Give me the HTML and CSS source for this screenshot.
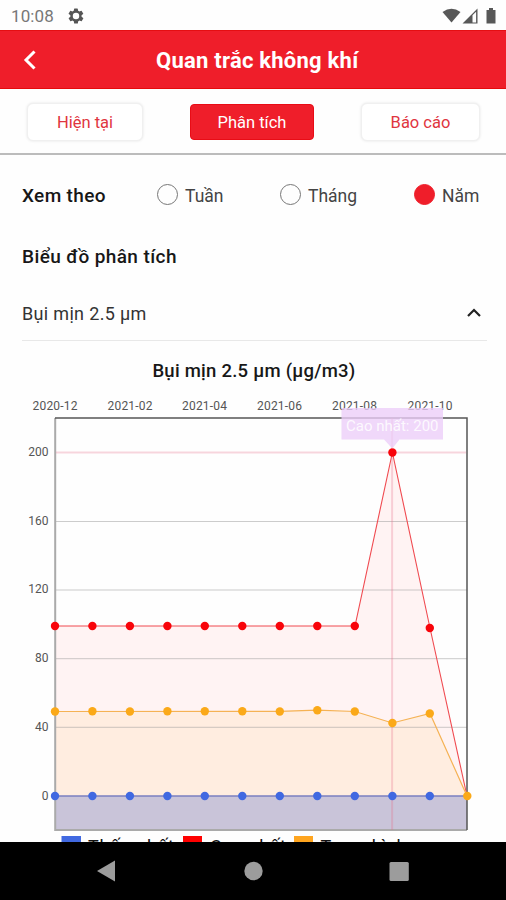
FILE: index.html
```
<!DOCTYPE html>
<html lang="vi">
<head>
<meta charset="utf-8">
<title>Quan trắc không khí</title>
<link rel="stylesheet" href="styles.css">
</head>
<body>
<div class="screen">
  <div class="status">
    <span class="clock">10:08</span>
    <svg class="gear" width="18" height="18" viewBox="0 0 24 24"><path fill-rule="evenodd" d="M19.4 13a7.500 7.500 0 0 0 0-2l2.100-1.600a.5.5 0 0 0 .1-.7l-2-3.400a.5.5 0 0 0-.6-.2l-2.500 1a7.500 7.500 0 0 0-1.700-1l-.4-2.600a.5.5 0 0 0-.5-.5h-4a.5.5 0 0 0-.5.500l-.4 2.600a7.500 7.500 0 0 0-1.700 1l-2.500-1a.5.5 0 0 0-.6.200l-2 3.400a.5.5 0 0 0 .1.700L4.500 11a7.500 7.500 0 0 0 0 2l-2.100 1.600a.5.5 0 0 0-.1.700l2 3.400c.1.200.4.300.6.200l2.500-1c.5.400 1.100.8 1.700 1l.4 2.600c0 .3.200.5.500.5h4c.3 0 .5-.2.500-.5l.4-2.600c.6-.2 1.200-.6 1.700-1l2.500 1c.2.100.5 0 .6-.2l2-3.400a.5.5 0 0 0-.1-.7zM12 16.300a4.300 4.300 0 1 1 0-8.600 4.300 4.300 0 0 1 0 8.600z"/></svg>
    <svg class="signals" width="56" height="18" viewBox="0 0 56 18"><path d="M.500 5Q9.500-1.500 18.500 5L9.500 15.500z"/><path d="M20.500 16.500 35.500 1.500v15zM30.500 8.300v7.200h3.600V4.700z" fill-rule="evenodd"/><path d="M44.500 3h2.500V1h4v2h2.500v13.500h-9z"/></svg>
  </div>
  <header class="header">
    <svg class="back" width="16" height="22" viewBox="0 0 16 22"><path d="M12.500 2.500 4 11l8.500 8.500"/></svg>
    <h1>Quan trắc không khí</h1>
  </header>
  <nav class="tabs">
    <button class="tab tab-now">Hiện tại</button>
    <button class="tab tab-active">Phân tích</button>
    <button class="tab tab-report">Báo cáo</button>
  </nav>
  <main>
    <div class="period">
      <strong>Xem theo</strong>
      <label class="option week"><i class="radio"></i>Tuần</label>
      <label class="option month"><i class="radio"></i>Tháng</label>
      <label class="option year"><i class="radio checked"></i>Năm</label>
    </div>
    <h2>Biểu đồ phân tích</h2>
    <div class="accordion"><span>Bụi mịn 2.5 µm</span><svg width="16" height="12" viewBox="0 0 16 12"><path d="m2 9 6-6 6 6"/></svg></div>
    <h3>Bụi mịn 2.5 µm (µg/m3)</h3>
    <svg class="chart" width="506" height="448" viewBox="0 394 506 448">
      <g class="axis-label" text-anchor="middle">
        <text x="55" y="410" textLength="45">2020-12</text><text x="130" y="410" textLength="45">2021-02</text><text x="204.500" y="410" textLength="45">2021-04</text><text x="279.500" y="410" textLength="45">2021-06</text><text x="354.500" y="410" textLength="45">2021-08</text><text x="430" y="410" textLength="45">2021-10</text>
      </g>
      <g class="axis-label" text-anchor="end">
        <text x="48.500" y="456">200</text><text x="48.500" y="525">160</text><text x="48.500" y="593">120</text><text x="48.500" y="662">80</text><text x="48.500" y="731">40</text><text x="48.500" y="800">0</text>
      </g>
      <path class="area-red" d="M55 626H355L392.400 452.500 430 628 467 796V796H55z"/>
      <path class="area-orange" d="M55 711.500 280 711.300 317 710.200 355 711.500 392.400 723 430 713.500 467 796H55z"/>
      <path class="area-blue" d="M55 796H467V830H55z"/>
      <path class="grid" d="M55 521.500H467M55 590H467M55 658.700H467M55 727.300H467"/>
      <path class="side" d="M55.200 418V830H467"/>
      <path class="frame" d="M55 418H467V830"/>
      <path class="line-red" d="M55 626H355L392.400 452.500 430 628 467 796"/>
      <path class="line-orange" d="M55 711.500 280 711.300 317 710.200 355 711.500 392.400 723 430 713.500 467 796"/>
      <path class="line-blue" d="M55 796H467"/>
      <path class="cross" d="M56 452.500H466M392.100 418V830"/>
      <g class="dot-red"><circle cx="55" cy="626" r="4.200"/><circle cx="92.400" cy="626" r="4.200"/><circle cx="129.900" cy="626" r="4.200"/><circle cx="167.400" cy="626" r="4.200"/><circle cx="204.800" cy="626" r="4.200"/><circle cx="242.300" cy="626" r="4.200"/><circle cx="279.800" cy="626" r="4.200"/><circle cx="317.300" cy="626" r="4.200"/><circle cx="354.800" cy="626" r="4.200"/><circle cx="392.400" cy="452.500" r="4.200"/><circle cx="429.800" cy="628" r="4.200"/></g>
      <g class="dot-blue"><circle cx="55" cy="796" r="4.200"/><circle cx="92.400" cy="796" r="4.200"/><circle cx="129.900" cy="796" r="4.200"/><circle cx="167.400" cy="796" r="4.200"/><circle cx="204.800" cy="796" r="4.200"/><circle cx="242.300" cy="796" r="4.200"/><circle cx="279.800" cy="796" r="4.200"/><circle cx="317.300" cy="796" r="4.200"/><circle cx="354.800" cy="796" r="4.200"/><circle cx="392.400" cy="796" r="4.200"/><circle cx="429.800" cy="796" r="4.200"/></g>
      <g class="dot-orange"><circle cx="55" cy="711.500" r="4.200"/><circle cx="92.400" cy="711.200" r="4.200"/><circle cx="129.900" cy="711.500" r="4.200"/><circle cx="167.400" cy="711.200" r="4.200"/><circle cx="204.800" cy="711.200" r="4.200"/><circle cx="242.300" cy="711.200" r="4.200"/><circle cx="279.800" cy="711.500" r="4.200"/><circle cx="317.300" cy="710.200" r="4.200"/><circle cx="354.800" cy="711.500" r="4.200"/><circle cx="392.400" cy="723" r="4.200"/><circle cx="429.800" cy="713.500" r="4.200"/><circle cx="467.300" cy="796" r="4.200"/></g>
      <path class="tip" d="M341.500 408H443V439.500H399.500L392.300 448.500 384 439.500H341.500z"/>
      <text class="tip-text" x="346" y="430.500" textLength="92.500">Cao nhất: 200</text>
      <path fill="#4169e1" d="M61.500 836H81v10H61.500z"/><path fill="#f00" d="M183 836h19v10h-19z"/><path fill="#ffa51f" d="M294 836h19v10h-19z"/>
      <g class="legend"><text x="88" y="852.500" textLength="86">Thấp nhất</text><text x="210" y="852.500" textLength="76">Cao nhất</text><text x="320.500" y="852.500" textLength="86">Trung bình</text></g>
    </svg>
  </main>
  <footer class="navbar">
    <svg width="506" height="58" viewBox="0 0 506 58"><path d="M97 29 115 18.500v21z"/><circle cx="253.500" cy="29" r="9.200"/><rect x="389.500" y="20" width="19.300" height="19" rx="1.500"/></svg>
  </footer>
</div>
</body>
</html>
```

FILE: styles.css
```
* { box-sizing: border-box; }
body { margin: 0; background: #fff; font-family: Roboto, sans-serif; color: #171717; }
.screen { width: 506px; height: 900px; display: flex; flex-direction: column; overflow: hidden; background: #fefefe; }
.status { height: 30px; flex: none; display: flex; align-items: center; padding: 1px 8px 0 11px; color: #777; }
.clock { width: 56px; font-size: 17px; letter-spacing: .1px; }
.gear { fill: #555; }
.signals { margin-left: auto; fill: #585858; }
.header { height: 59px; flex: none; display: flex; align-items: center; background: #ef1e2a; border-top: 1px solid #e50e12; border-bottom: 1px solid #e50b0b; color: #fff; }
.back { margin: 1px 0 0 21.5px; fill: none; stroke: #fff; stroke-width: 3; }
h1 { margin: 3px 0 0 118.5px; font-size: 22px; line-height: 28px; font-weight: 700; letter-spacing: .24px; white-space: nowrap; }
.tabs { height: 66px; flex: none; display: flex; align-items: flex-start; padding: 14px 25px 0 27px; border-bottom: 2px solid #bcbcbc; }
.tab { height: 38px; padding: 1px 0 0; border: 1px solid #f0f0f0; border-radius: 6px; background: #fff; font: 400 16.500px/35px Roboto, sans-serif; color: #df3540; box-shadow: 0 0 3px #e5e5e5; }
.tab-now { width: 116px; }
.tab-active { width: 124px; height: 36px; margin: 1px 0 0 47px; border: 1px solid #e90c16; border-radius: 4px; background: #ef1e2a; color: #fff; line-height: 33px; box-shadow: none; }
.tab-report { width: 119px; margin-left: 47px; }
main { flex: 1; min-height: 0; overflow: hidden; }
.period { height: 70px; display: flex; align-items: center; padding: 11px 0 0 22px; }
.period strong { width: 135px; font-size: 19px; font-weight: 500; letter-spacing: .35px; }
.option { display: flex; align-items: center; font-size: 17.5px; color: #444; white-space: nowrap; }
.radio { width: 21px; height: 21px; margin: -3px 7px 0 0; border: 1px solid #777; border-radius: 50%; }
.checked { border-color: #ef1e2a; background: #ef1e2a; }
.week { width: 123px; }
.month { width: 134px; }
h2 { margin: 18px 0 0 22px; font-size: 19px; line-height: 28px; font-weight: 500; letter-spacing: .4px; }
.accordion { height: 59px; margin: 11px 19px 0 22px; padding: 5px 5px 0 0; display: flex; align-items: center; justify-content: space-between; border-bottom: 1px solid #e8e8e8; font-size: 18px; letter-spacing: .33px; color: #333; }
.accordion svg { fill: none; stroke: #222; stroke-width: 2.200; margin-top: -2px; }
h3 { margin: 17px 0 0; padding-left: 2px; font-size: 18.500px; line-height: 26px; font-weight: 500; letter-spacing: .25px; text-align: center; }
.chart { display: block; margin-top: 10px; }
.axis-label { font-size: 12px; fill: #555; }
.grid { fill: none; stroke: #999; stroke-opacity: .5; }
.side { fill: none; stroke: #aaa; stroke-width: 2; }
.frame { fill: none; stroke: #555; stroke-width: 1.500; }
.area-red { fill: #fff3f3; }
.area-orange { fill: #ffede0; }
.area-blue { fill: #c9c4d9; }
.line-red { fill: none; stroke: #f04a50; stroke-width: 1.100; }
.line-orange { fill: none; stroke: #f5b254; stroke-width: 1.200; }
.line-blue { fill: none; stroke: #7a7fc0; stroke-width: 1.500; }
.cross { fill: none; stroke: #e76c88; stroke-opacity: .28; stroke-width: 2; }
.dot-red { fill: #f8040a; }
.dot-blue { fill: #4169e1; }
.dot-orange { fill: #fba918; }
.tip { fill: #eccdf8; fill-opacity: .78; }
.tip-text { font-size: 15px; fill: #fff; fill-opacity: .85; }
.legend { font-size: 18px; fill: #111; }
.navbar { height: 58px; flex: none; background: #000; }
.navbar svg { display: block; fill: #9c9c9c; }
```
